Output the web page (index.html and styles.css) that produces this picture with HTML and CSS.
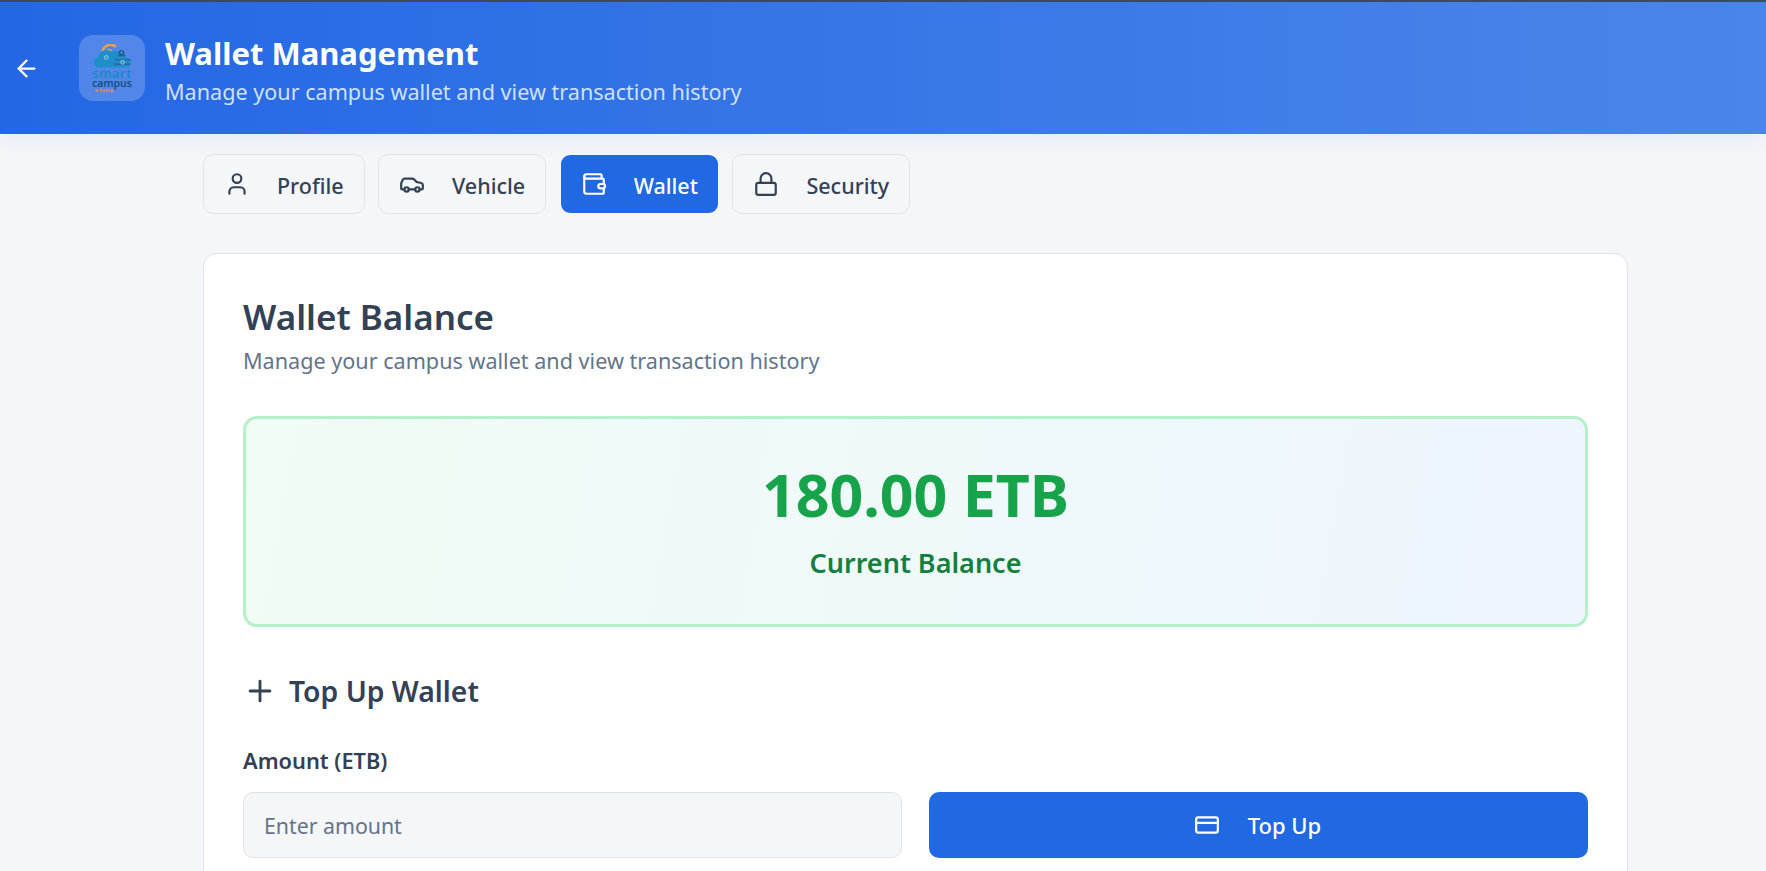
FILE: index.html
```html
<!DOCTYPE html>
<html lang="en">
<head>
    <meta charset="UTF-8">
    <meta name="viewport" content="width=device-width, initial-scale=1.0">
    <title>Wallet Management</title>
    <link rel="stylesheet" href="styles.css">
</head>
<body>
    <header class="topbar">
        <button class="back-btn" aria-label="Back">
            <svg width="27" height="27" viewBox="0 0 24 24" class="ic"><path d="m12 19-7-7 7-7"/><path d="M19 12H5"/></svg>
        </button>
        <div class="logo-box">
            <svg class="logo-cloud" width="40" height="24" viewBox="0 0 40 25">
                <path d="M9 8a8.500 8.500 0 0 1 14-5" fill="none" stroke="#eda33a" stroke-width="2.600"/>
                <path d="M12 9a5 5 0 0 1 6.500-2.500" fill="none" stroke="#eda33a" stroke-width="1.800"/>
                <path d="M6 24.500a5.500 5.500 0 0 1-1-11 8 8 0 0 1 13.500-5 7 7 0 0 1 9.500.500 5.500 5.500 0 0 1 5.500 5 5.800 5.800 0 0 1 5 5.700 5.800 5.800 0 0 1-6 4.800z" fill="#1f8fca"/>
                <path d="M22 16.500h17M21 21h17M25 12h8" stroke="#2a6296" stroke-width="1.300"/>
                <circle cx="29" cy="9" r="2.200" fill="none" stroke="#17527f" stroke-width="1.100"/>
                <circle cx="30" cy="19" r="1.900" fill="none" stroke="#a3d3ec" stroke-width="1"/>
                <circle cx="13" cy="14" r="1.900" fill="none" stroke="#a3d3ec" stroke-width="1"/>
            </svg>
            <span class="logo-smart">smart</span>
            <span class="logo-campus">campus</span>
            <span class="logo-tag">e-kamp</span>
        </div>
        <div class="topbar-text">
            <h1>Wallet Management</h1>
            <p>Manage your campus wallet and view transaction history</p>
        </div>
    </header>

    <main class="content">
        <nav class="tabs">
            <a class="tab">
                <svg width="26" height="26" viewBox="0 0 24 24" class="ic"><path d="M19 21v-2a4 4 0 0 0-4-4H9a4 4 0 0 0-4 4v2"/><circle cx="12" cy="7" r="4"/></svg>
                <span>Profile</span>
            </a>
            <a class="tab">
                <svg width="26" height="26" viewBox="0 0 24 24" class="ic"><path d="M19 17h2c.6 0 1-.4 1-1v-3c0-.9-.7-1.700-1.500-1.900C18.700 10.600 16 10 16 10s-1.300-1.400-2.200-2.300c-.5-.4-1.100-.7-1.800-.7H5c-.6 0-1.100.4-1.400.9l-1.400 2.900A3.700 3.700 0 0 0 2 12v4c0 .6.4 1 1 1h2"/><circle cx="7" cy="17" r="2"/><path d="M9 17h6"/><circle cx="17" cy="17" r="2"/></svg>
                <span>Vehicle</span>
            </a>
            <a class="tab tab-active">
                <svg width="26" height="26" viewBox="0 0 24 24" class="ic"><path d="M19 7V4a1 1 0 0 0-1-1H5a2 2 0 0 0 0 4h15a1 1 0 0 1 1 1v4h-3a2 2 0 0 0 0 4h3a1 1 0 0 0 1-1v-2a1 1 0 0 0-1-1"/><path d="M3 5v14a2 2 0 0 0 2 2h15a1 1 0 0 0 1-1v-4"/></svg>
                <span>Wallet</span>
            </a>
            <a class="tab">
                <svg width="26" height="26" viewBox="0 0 24 24" class="ic"><rect x="3" y="11" width="18" height="11" rx="2" ry="2"/><path d="M7 11V7a5 5 0 0 1 10 0v4"/></svg>
                <span>Security</span>
            </a>
        </nav>

        <section class="card">
            <h2>Wallet Balance</h2>
            <p class="card-sub">Manage your campus wallet and view transaction history</p>

            <div class="balance">
                <div class="balance-amount">180.00 ETB</div>
                <div class="balance-label">Current Balance</div>
            </div>

            <h3 class="topup-title">
                <svg width="34" height="34" viewBox="0 0 24 24" class="ic"><path d="M5 12h14"/><path d="M12 5v14"/></svg>
                Top Up Wallet
            </h3>

            <label class="field-label" for="amount">Amount (ETB)</label>
            <div class="topup-row">
                <input id="amount" class="amount-input" type="text" placeholder="Enter amount">
                <button class="topup-btn">
                    <svg width="26" height="26" viewBox="0 0 24 24" class="ic"><rect x="2" y="5" width="20" height="14" rx="2"/><path d="M2 10h20"/></svg>
                    Top Up
                </button>
            </div>
        </section>
    </main>
</body>
</html>
```

FILE: styles.css
```css
* {
    box-sizing: border-box;
}
html, body {
    height: 100%;
}
body {
    margin: 0;
    overflow: hidden;
    background: #f5f6f8;
    color: #334155;
    font-family: "Noto Sans", "Open Sans", sans-serif;
}
.ic {
    fill: none;
    stroke: currentColor;
    stroke-width: 2;
    stroke-linecap: round;
    stroke-linejoin: round;
    flex-shrink: 0;
}

/* top bar */
.topbar {
    height: 134px;
    display: flex;
    align-items: center;
    padding: 0 0 0 13px;
    border-top: 2px solid #3a4a63;
    background: linear-gradient(90deg, #2467e4, #4a86e9);
    box-shadow: 0 6px 20px rgba(36, 103, 228, 0.08);
    color: #fff;
}
.back-btn {
    width: 27px;
    height: 27px;
    padding: 0;
    margin-right: 39px;
    border: 0;
    background: none;
    color: #fff;
}
.logo-box {
    width: 66px;
    height: 66px;
    margin-right: 20px;
    border-radius: 14px;
    background: rgba(255, 255, 255, 0.2);
    display: flex;
    flex-direction: column;
    align-items: center;
    padding-top: 9px;
    line-height: 1;
}
.logo-cloud {
    display: block;
    margin-left: 1px;
}
.logo-smart {
    font-size: 13px;
    line-height: 10px;
    font-weight: 500;
    letter-spacing: 0.6px;
    color: #0f8cc0;
}
.logo-campus {
    font-size: 10.500px;
    line-height: 10px;
    font-weight: 600;
    color: #17507d;
}
.logo-tag {
    font-size: 5px;
    line-height: 5px;
    font-weight: 700;
    color: #e08f2e;
    margin-right: 16px;
}
.topbar-text {
    padding-top: 2px;
}
.topbar-text h1 {
    margin: 0;
    font-size: 31px;
    line-height: 42px;
    font-weight: 700;
}
.topbar-text p {
    margin: 4px 0 0;
    font-size: 21.600px;
    line-height: 28px;
    color: #cfe0fb;
}

/* tabs */
.content {
    width: 1425px;
    margin-left: 203px;
}
.tabs {
    display: flex;
    gap: 13.500px;
    padding-top: 20px;
}
.tab {
    height: 60px;
    display: flex;
    align-items: center;
    gap: 27px;
    padding: 0 20px;
    border: 1px solid #e0e3eb;
    border-radius: 10px;
    font-size: 21.500px;
    font-weight: 500;
}
.tab span {
    padding-top: 2px;
}
.tab-active {
    background: #2169e3;
    background-clip: padding-box;
    border-color: transparent;
    color: #fff;
}

/* card */
.card {
    margin-top: 39px;
    padding: 39px 39px 40px;
    height: 800px;
    background: #fff;
    border: 1px solid #e0e3eb;
    border-radius: 14px;
}
.card h2 {
    margin: 0;
    font-size: 35px;
    line-height: 48px;
    font-weight: 600;
}
.card-sub {
    margin: 6px 0 0;
    font-size: 21.600px;
    line-height: 28px;
    color: #64748b;
}
.balance {
    height: 211px;
    margin-top: 41px;
    display: flex;
    flex-direction: column;
    align-items: center;
    border: 3px solid #b5f0cb;
    border-radius: 14px;
    background: linear-gradient(100deg, #effdf5, #eef5fe);
    padding-top: 37px;
}
.balance-amount {
    font-size: 59px;
    line-height: 76px;
    font-weight: 700;
    color: #16a34a;
}
.balance-label {
    margin-top: 13px;
    font-size: 27px;
    line-height: 36px;
    font-weight: 600;
    color: #15803d;
}
.topup-title {
    display: flex;
    align-items: center;
    gap: 12px;
    margin: 44px 0 0;
    font-size: 28.300px;
    line-height: 40px;
    font-weight: 600;
}
.field-label {
    display: block;
    margin-top: 36px;
    font-size: 21.800px;
    line-height: 28px;
    font-weight: 600;
}
.topup-row {
    display: grid;
    grid-template-columns: 1fr 1fr;
    gap: 27px;
    margin-top: 17px;
}
.amount-input {
    height: 66px;
    padding: 0 20px;
    border: 1px solid #e0e3eb;
    border-radius: 10px;
    background: #f5f6f8;
    font: 21.300px "Noto Sans", "Open Sans", sans-serif;
    color: #334155;
}
.amount-input::placeholder {
    color: #64748b;
    opacity: 1;
}
.topup-btn {
    height: 66px;
    display: flex;
    align-items: center;
    justify-content: center;
    gap: 28px;
    padding: 0 2px 0 0;
    border: 0;
    border-radius: 10px;
    background: #2169e3;
    color: #fff;
    font: 500 22px "Noto Sans", "Open Sans", sans-serif;
}
```
